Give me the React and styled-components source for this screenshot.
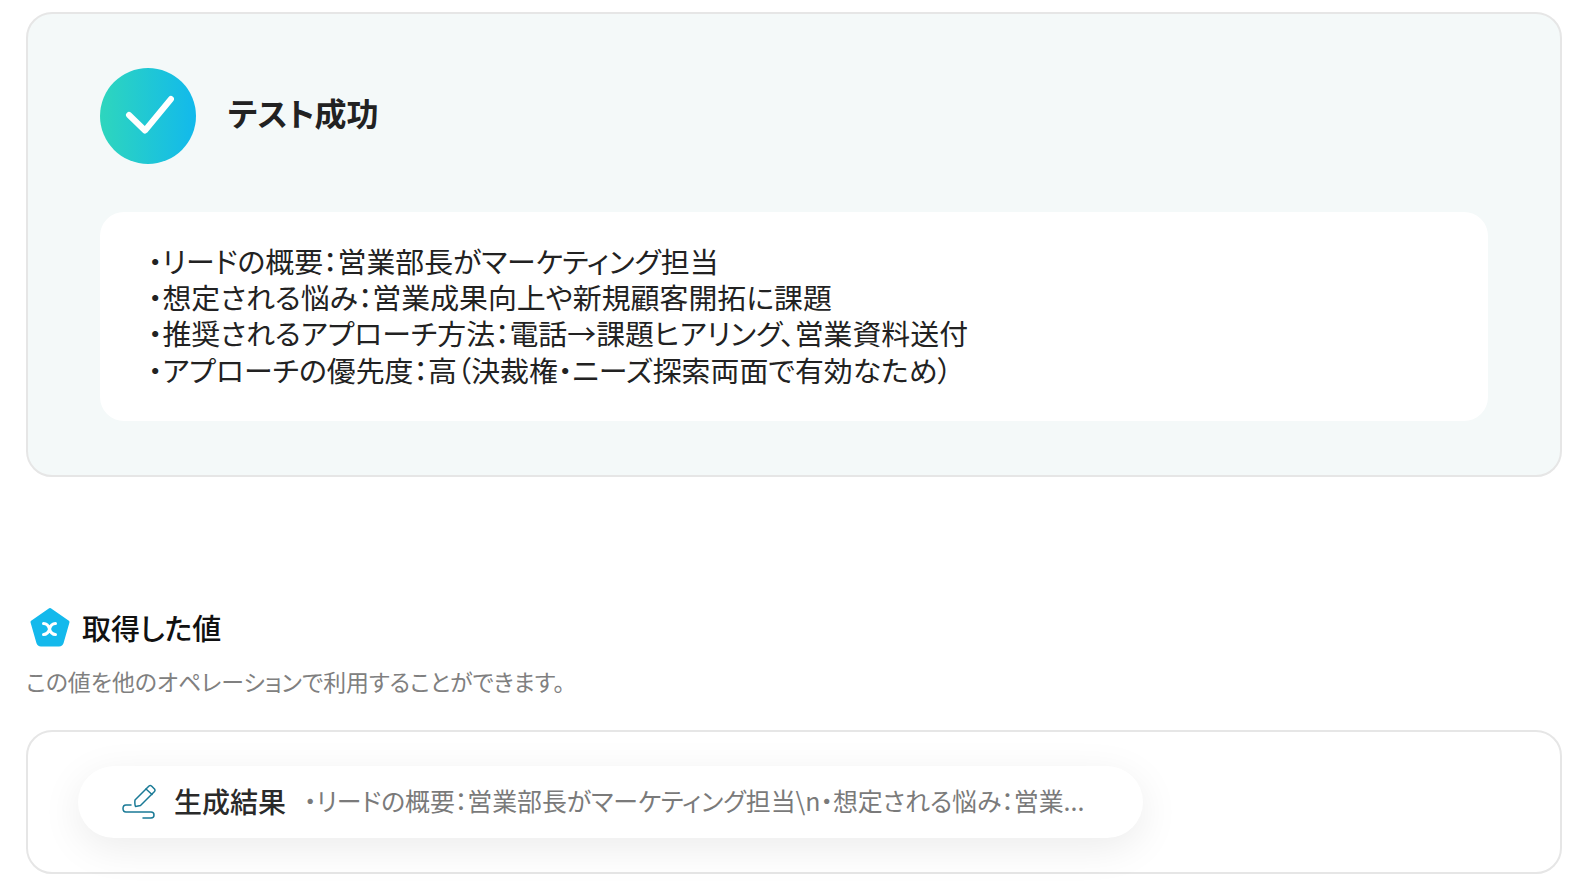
import React from "react";
import styled, { createGlobalStyle } from "styled-components";

const Global = createGlobalStyle`
  html, body { margin: 0; padding: 0; background: #fff; }
  body { font-family: "Noto Sans CJK JP", "Noto Sans", sans-serif; font-feature-settings: "palt"; }
`;
const Page = styled.div`
  width: 1582px; height: 892px; box-sizing: border-box; padding: 12px 20px 0 26px; overflow: hidden;
`;
const ResultPanel = styled.section`
  box-sizing: border-box; height: 465px; padding: 54px 72px 0; background: #f4f9f9;
  border: 2px solid #e6e6e6; border-radius: 26px;
`;
const Head = styled.div`
  display: flex; align-items: center; gap: 32px; height: 96px;
`;
const Badge = styled.div`
  width: 96px; height: 96px; border-radius: 50%; display: flex; align-items: center; justify-content: center;
  background: linear-gradient(90deg, #2ed6bd 0%, #12b9ec 100%);
`;
const Title = styled.h2`
  margin: 0 0 8px; font-size: 32px; line-height: 40px; font-weight: 700; color: #222;
`;
const OutputBox = styled.div`
  margin-top: 48px; height: 209px; box-sizing: border-box; padding: 30px 48px; background: #fff; border-radius: 24px;
  font-size: 28.9px; line-height: 36.2px; color: #222; white-space: pre-line;
`;
const ValuesHead = styled.div`
  margin-top: 130px; display: flex; align-items: center; gap: 12px; height: 40px; padding-left: 4px;
`;
const ValuesTitle = styled.h3`
  margin: 0; font-size: 29px; line-height: 40px; font-weight: 500; color: #111;
`;
const Hint = styled.p`
  margin: 18px 0 0; font-size: 22.9px; line-height: 32px; color: #808080;
`;
const ValuesPanel = styled.section`
  margin-top: 33px; box-sizing: border-box; height: 144px; padding: 34px 50px; background: #fff;
  border: 2px solid #e6e6e6; border-radius: 26px;
`;
const Pill = styled.div`
  width: 1065px; height: 72px; box-sizing: border-box; padding: 0 44px; display: flex; align-items: center;
  background: #fff; border-radius: 36px; box-shadow: 0 10px 40px rgba(0,0,0,.08);
`;
const PillLabel = styled.span`
  margin-left: 18px; margin-bottom: 3px; font-size: 28px; font-weight: 500; color: #2a2a2a; white-space: nowrap;
`;
const PillValue = styled.span`
  margin-left: 18px; margin-bottom: 4px; font-size: 24.9px; color: #7a7a7a; white-space: nowrap;
`;

const text = `・リードの概要：営業部長がマーケティング担当
・想定される悩み：営業成果向上や新規顧客開拓に課題
・推奨されるアプローチ方法：電話→課題ヒアリング、営業資料送付
・アプローチの優先度：高（決裁権・ニーズ探索両面で有効なため）`;

export default function App() {
  return (
    <>
      <Global />
      <Page>
        <ResultPanel>
          <Head>
            <Badge>
              <svg width="52" height="44" viewBox="0 0 52 44" fill="none">
                <path d="M7 21 L23 36.5 L49 5" stroke="#fff" strokeWidth="6" strokeLinecap="round" strokeLinejoin="round" />
              </svg>
            </Badge>
            <Title>テスト成功</Title>
          </Head>
          <OutputBox>{text}</OutputBox>
        </ResultPanel>
        <ValuesHead>
          <svg width="40" height="40" viewBox="0 0 40 40">
            <path d="M20 2.5 L38 15 L32 36 Q31.5 38 29 38 L11 38 Q8.5 38 8 36 L2 15 Z" fill="#14b9ec" stroke="#14b9ec" strokeWidth="3" strokeLinejoin="round" />
            <path d="M13.5 16.5 Q18 16.5 19.5 22 Q21 27.5 25.5 27.5 M25.5 16.5 Q21 16.5 19.5 22 Q18 27.5 13.5 27.5" fill="none" stroke="#fff" strokeWidth="3" strokeLinecap="round" />
          </svg>
          <ValuesTitle>取得した値</ValuesTitle>
        </ValuesHead>
        <Hint>この値を他のオペレーションで利用することができます。</Hint>
        <ValuesPanel>
          <Pill>
            <svg width="34" height="36" viewBox="0 0 34 36" fill="none" stroke="#1a7a96" strokeWidth="1.5" strokeLinecap="round" strokeLinejoin="round">
              <path d="M13 16 L27 2 Q28.3 1 29.5 2 L32.5 5 Q33.5 6.3 32.5 7.5 L18.5 21.5 L13.5 22.5 Q12.5 20 13 16 Z" />
              <path d="M24 5 L30 10.5" />
              <path d="M9 21 L4 21 Q1 21 1 24.5 Q1 28 4 28 L29 28 Q32 28 32 31 Q32 34 29 34 L21 34" />
            </svg>
            <PillLabel>生成結果</PillLabel>
            <PillValue>・リードの概要：営業部長がマーケティング担当\n・想定される悩み：営業...</PillValue>
          </Pill>
        </ValuesPanel>
      </Page>
    </>
  );
}
